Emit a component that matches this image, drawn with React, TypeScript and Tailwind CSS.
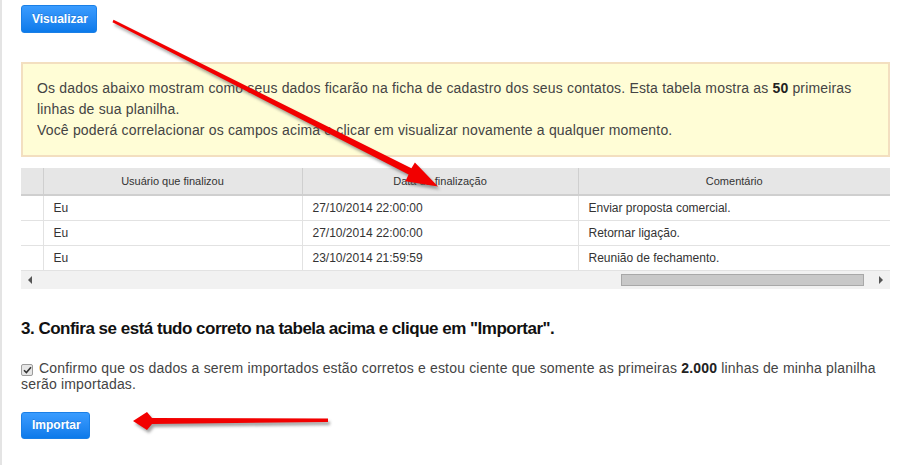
import React from 'react';

const rows = [
  { user: 'Eu', date: '27/10/2014 22:00:00', comment: 'Enviar proposta comercial.' },
  { user: 'Eu', date: '27/10/2014 22:00:00', comment: 'Retornar ligação.' },
  { user: 'Eu', date: '23/10/2014 21:59:59', comment: 'Reunião de fechamento.' },
];

const BlueButton: React.FC<{ label: string; className?: string }> = ({ label, className = '' }) => (
  <button
    className={`h-[28px] rounded-[3px] border border-[#1a7fe6] bg-gradient-to-b from-[#3a9cff] to-[#0b7aea] px-[10px] text-[12px] font-bold text-white [text-shadow:0_-1px_0_rgba(0,0,0,0.15)] ${className}`}
  >
    {label}
  </button>
);

const arrowA = '113.5,19.8 411.4,168.3 414.9,162.6 438,186.5 405.4,181.2 408.6,174.4 112.5,22.2';
const arrowB = '133,421 147,412 152,418 328,418.5 328,422 152,424 147,430';

const Arrows: React.FC = () => (
  <svg className="pointer-events-none absolute left-0 top-0" width="900" height="465" viewBox="0 0 900 465">
    <defs>
      <filter id="sh" x="-10%" y="-10%" width="120%" height="120%">
        <feGaussianBlur stdDeviation="1.5" />
      </filter>
    </defs>
    <g transform="translate(2 3)" fill="#555" opacity="0.55" filter="url(#sh)">
      <polygon points={arrowA} />
      <polygon points={arrowB} />
    </g>
    <g fill="#f20000">
      <polygon points={arrowA} />
      <polygon points={arrowB} />
    </g>
  </svg>
);

export default function App() {
  return (
    <div className="relative h-[465px] w-[900px] overflow-hidden bg-white font-['Liberation_Sans',Arial,sans-serif] text-[#333]">
      <div className="h-full border-l-[2px] border-[#e4e4e4] pl-[19px] pr-[10px] pt-[5px]">
        <BlueButton label="Visualizar" className="w-[76px]" />

        <div className="mt-[29px] w-[869px] border-[2px] border-[#f3dfc0] bg-[#fffdd6] py-[14px] pl-[14px] pr-[20px] text-[14px] leading-[21px] tracking-[0.17px] text-[#444]">
          Os dados abaixo mostram como seus dados ficarão na ficha de cadastro dos seus contatos. Esta tabela mostra as{' '}
          <b className="text-[#222]">50</b> primeiras linhas de sua planilha.
          <br />
          Você poderá correlacionar os campos acima e clicar em visualizar novamente a qualquer momento.
        </div>

        <div className="mt-[11px] w-[869px]">
          <table className="w-full table-fixed border-collapse text-[12px]">
            <colgroup>
              <col className="w-[22px]" />
              <col className="w-[259px]" />
              <col className="w-[276px]" />
              <col />
            </colgroup>
            <thead>
              <tr className="h-[27px] border-b-[2px] border-[#cfcfcf] bg-[#e6e6e6] text-[11px] text-[#333]">
                <th className="border-r border-[#cfcfcf] font-normal"></th>
                <th className="border-r border-[#cfcfcf] font-normal">Usuário que finalizou</th>
                <th className="border-r border-[#cfcfcf] font-normal">Data da finalização</th>
                <th className="font-normal">Comentário</th>
              </tr>
            </thead>
            <tbody>
              {rows.map((r, i) => (
                <tr key={i} className="h-[25px] border-b border-[#e2e2e2]">
                  <td className="border-r border-[#e2e2e2]"></td>
                  <td className="border-r border-[#e2e2e2] pl-[10px]">{r.user}</td>
                  <td className="border-r border-[#e2e2e2] pl-[10px]">{r.date}</td>
                  <td className="pl-[10px]">{r.comment}</td>
                </tr>
              ))}
            </tbody>
          </table>
          <div className="flex h-[18px] items-center bg-[#f1f1f1]">
            <span className="ml-[7px] h-0 w-0 border-y-[4px] border-r-[4px] border-y-transparent border-r-[#555]" />
            <div className="flex-1" />
            <div className="h-[12px] w-[243px] border border-[#a8a8a8] bg-[#c8c8c8]" />
            <span className="ml-[15px] mr-[7px] h-0 w-0 border-y-[4px] border-l-[4px] border-y-transparent border-l-[#555]" />
          </div>
        </div>

        <h3 className="mt-[30px] text-[17px] font-bold leading-[20px] tracking-[-0.5px] text-[#111]">
          3. Confira se está tudo correto na tabela acima e clique em "Importar".
        </h3>

        <p className="mt-[21px] w-[869px] text-[14px] leading-[16px] tracking-[0.18px] text-[#444]">
          <span className="relative top-[1px] mr-[6px] inline-flex h-[12px] w-[12px] items-center justify-center rounded-[2px] border border-[#9c9c9c] bg-[#e6e6e6]">
            <svg width="9" height="8" viewBox="0 0 9 8">
              <path d="M1 4.2 L3.4 6.6 L8 1.2" fill="none" stroke="#333" strokeWidth="1.6" />
            </svg>
          </span>
          Confirmo que os dados a serem importados estão corretos e estou ciente que somente as primeiras{' '}
          <b className="text-[#222]">2.000</b> linhas de minha planilha serão importadas.
        </p>

        <BlueButton label="Importar" className="mt-[20px] w-[69px] !h-[27px]" />
      </div>
      <Arrows />
    </div>
  );
}
